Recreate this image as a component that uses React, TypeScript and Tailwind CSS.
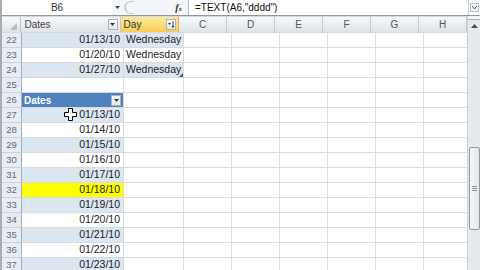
import React from "react";

const font = { fontFamily: '"Liberation Sans", Arial, sans-serif' };

type Row = {
  n: number;
  a?: string;
  b?: string;
  band?: "blue" | "white" | "yellow" | "head";
  tableB?: boolean;
  corner?: boolean;
};

const rows: Row[] = [
  { n: 22, a: "01/13/10", b: "Wednesday", band: "blue", tableB: true },
  { n: 23, a: "01/20/10", b: "Wednesday", band: "white", tableB: true },
  { n: 24, a: "01/27/10", b: "Wednesday", band: "blue", tableB: true, corner: true },
  { n: 25 },
  { n: 26, a: "Dates", band: "head" },
  { n: 27, a: "01/13/10", band: "blue" },
  { n: 28, a: "01/14/10", band: "white" },
  { n: 29, a: "01/15/10", band: "blue" },
  { n: 30, a: "01/16/10", band: "white" },
  { n: 31, a: "01/17/10", band: "blue" },
  { n: 32, a: "01/18/10", band: "yellow" },
  { n: 33, a: "01/19/10", band: "blue" },
  { n: 34, a: "01/20/10", band: "white" },
  { n: 35, a: "01/21/10", band: "blue" },
  { n: 36, a: "01/22/10", band: "white" },
  { n: 37, a: "01/23/10", band: "blue" },
];

const letters = ["C", "D", "E", "F", "G", "H"];

const DropBtn = () => (
  <div className="w-[10px] h-[11px] border border-[#a9b3c0] bg-gradient-to-b from-[#fdfdfd] to-[#e3e6ea] flex items-center justify-center">
    <svg width="5" height="3" viewBox="0 0 5 3">
      <path d="M0 0h5L2.5 3z" fill="#3b3b3b" />
    </svg>
  </div>
);

const FatCross = () => (
  <svg width="13" height="13" viewBox="0 0 13 13" className="absolute left-[-15px] top-[1px]">
    <path
      d="M4.5 0.5h4v4h4v4h-4v4h-4v-4h-4v-4h4z"
      fill="#fff"
      stroke="#000"
      strokeWidth="1"
    />
  </svg>
);

export default function App() {
  return (
    <div
      className="w-[480px] h-[270px] overflow-hidden bg-white flex flex-col border-l-2 border-[#a7adb5] text-[#222]"
      style={font}
    >
      {/* formula bar */}
      <div className="h-[16px] flex items-stretch border-b border-[#8d96a3] bg-[#f3f5f8] shrink-0">
        <div className="w-[110px] bg-white flex items-center justify-center text-[10px] text-[#333]">
          B6
        </div>
        <div className="w-[10px] flex items-center justify-center">
          <svg width="5" height="3" viewBox="0 0 5 3">
            <path d="M0 0h5L2.5 3z" fill="#444" />
          </svg>
        </div>
        <div className="w-[14px] flex items-center">
          <div className="w-[10px] h-[13px] rounded-l-full border-l-2 border-t border-b border-[#c9ced6] ml-[2px]" />
        </div>
        <div className="flex-1 flex items-center justify-end pr-[6px]">
          <span className="text-[10px] italic font-bold text-[#333]" style={{ fontFamily: '"Liberation Serif", serif' }}>
            f<span className="text-[7px]">x</span>
          </span>
        </div>
        <div className="w-[280px] bg-white border-l border-[#b6bcc6] flex items-center pl-[6px] text-[10px] text-[#111]">
          =TEXT(A6,"dddd")
        </div>
        <div className="w-[12px] bg-white border-l border-[#c7ccd4] flex items-start justify-center pt-[3px]">
          <div className="w-[9px] h-[9px] border border-[#b8bec7] flex items-center justify-center bg-[#f4f6f8]">
            <svg width="5" height="3" viewBox="0 0 5 3">
              <path d="M0 0l2.5 3L5 0" stroke="#555" fill="none" />
            </svg>
          </div>
        </div>
      </div>

      <div className="flex flex-1 min-h-0">
        {/* sheet */}
        <div className="flex-1 flex flex-col min-w-0 overflow-hidden">
          {/* column headers */}
          <div className="h-[17px] flex shrink-0 border-t border-[#d5dae1] border-b border-[#9eb0c6] text-[10px] text-[#444]">
            <div className="w-[20px] bg-gradient-to-b from-[#f7f8fa] to-[#dfe3e8] border-r border-[#b9c2cd] relative">
              <svg width="7" height="7" viewBox="0 0 7 7" className="absolute right-[3px] bottom-[2px]">
                <path d="M7 0v7H0z" fill="#b8bec6" />
              </svg>
            </div>
            <div className="w-[102px] bg-gradient-to-b from-[#f7f8fa] to-[#dfe3e8] border-r border-[#c4cbd4] flex items-center justify-between pl-[3px] pr-[2px]">
              <span>Dates</span>
              <DropBtn />
            </div>
            <div className="w-[60px] bg-gradient-to-b from-[#fde99a] to-[#f8cd54] border-r border-[#d9b25a] flex items-center justify-between pl-[3px] pr-[2px] text-[#333]">
              <span>Day</span>
              <div className="w-[10px] h-[11px] border border-[#a9b3c0] bg-gradient-to-b from-[#fdfdfd] to-[#e3e6ea] flex items-center justify-center">
                <svg width="7" height="7" viewBox="0 0 7 7">
                  <path d="M0 2h3L1.5 4z" fill="#333" />
                  <path d="M5 0v6M4 5l1 1.5L6 5" stroke="#333" strokeWidth="0.9" fill="none" />
                </svg>
              </div>
            </div>
            {letters.map((l) => (
              <div
                key={l}
                className="w-[48px] shrink-0 bg-gradient-to-b from-[#f7f8fa] to-[#dfe3e8] border-r border-[#c4cbd4] flex items-center justify-center text-[#555]"
              >
                {l}
              </div>
            ))}
          </div>

          {/* rows */}
          {rows.map((r) => {
            const aBg =
              r.band === "blue"
                ? "bg-[#dce6f1]"
                : r.band === "yellow"
                ? "bg-[#ffff00]"
                : r.band === "head"
                ? "bg-[#4f81bd]"
                : "bg-white";
            const bBg = r.tableB && r.band === "blue" ? "bg-[#dce6f1]" : "bg-white";
            return (
              <div key={r.n} className="h-[15px] flex shrink-0 text-[10.5px]">
                <div className="w-[20px] shrink-0 bg-[#e9edf2] border-r border-[#9eb0c6] border-b border-b-[#c9d3df] flex items-center justify-center text-[9.5px] text-[#5b6b80]">
                  {r.n}
                </div>
                <div
                  className={`w-[102px] shrink-0 ${aBg} border-r border-b border-[#d6dbe2] flex items-center relative ${
                    r.band === "head" ? "justify-between pl-[2px] pr-[2px]" : "justify-end pr-[3px]"
                  }`}
                >
                  {r.band === "head" ? (
                    <>
                      <span className="text-white font-bold text-[10px]">{r.a}</span>
                      <DropBtn />
                    </>
                  ) : (
                    <span className="relative text-[#222]">
                      {r.n === 27 && <FatCross />}
                      {r.a}
                    </span>
                  )}
                </div>
                <div className={`w-[60px] shrink-0 ${bBg} border-r border-b border-[#d6dbe2] flex items-center pl-[2px] relative`}>
                  {r.b}
                  {r.corner && (
                    <svg width="4" height="4" viewBox="0 0 4 4" className="absolute right-[0px] bottom-[0px]">
                      <path d="M4 0v4H0z" fill="#3d5a80" />
                    </svg>
                  )}
                </div>
                {letters.map((l) => (
                  <div key={l} className="w-[48px] shrink-0 border-r border-b border-[#dadcdf]" />
                ))}
              </div>
            );
          })}
        </div>

        {/* vertical scrollbar */}
        <div className="w-[13px] shrink-0 bg-[#e6eaef] border-l border-[#c9d0d8] flex flex-col items-center">
          <div className="w-full h-[4px] border-b border-[#aab3bf] bg-[#f3f5f7]" />
          <div className="w-full h-[12px] flex items-center justify-center">
            <svg width="7" height="4" viewBox="0 0 7 4">
              <path d="M0 4h7L3.5 0z" fill="#4a4f57" />
            </svg>
          </div>
          <div className="h-[115px]" />
          <div className="w-[11px] h-[83px] rounded-[2px] border border-[#8e98a6] bg-gradient-to-r from-[#f7f8fa] to-[#e2e6eb] flex flex-col items-center justify-center gap-[1px]">
            <div className="w-[5px] h-px bg-[#8a929d]" />
            <div className="w-[5px] h-px bg-[#8a929d]" />
            <div className="w-[5px] h-px bg-[#8a929d]" />
          </div>
        </div>
      </div>
    </div>
  );
}
